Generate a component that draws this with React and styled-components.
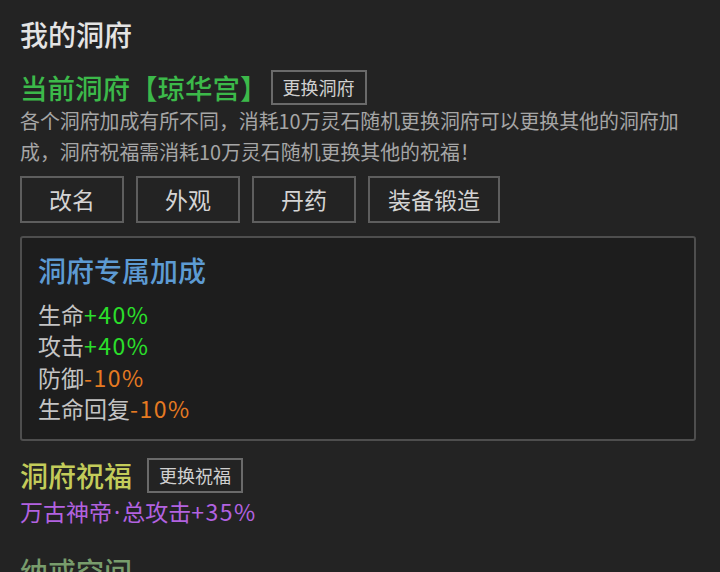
import styled, { createGlobalStyle } from "styled-components";

const GlobalStyle = createGlobalStyle`
  html, body {
    margin: 0;
    padding: 0;
    background: #232323;
  }
  body {
    font-family: "Noto Sans CJK SC", "Noto Sans", sans-serif;
    color: #d8d8d8;
  }
`;

const stats = [
  { label: "生命", value: "+40%", up: true },
  { label: "攻击", value: "+40%", up: true },
  { label: "防御", value: "-10%", up: false },
  { label: "生命回复", value: "-10%", up: false },
];

const actions = ["改名", "外观", "丹药", "装备锻造"];

function App() {
  return (
    <>
      <GlobalStyle />
      <Page>
        <PageTitle>我的洞府</PageTitle>

        <HeadRow>
          <Heading color="#3cb94a" $size="27.5px">当前洞府【琼华宫】</Heading>
          <SmallButton>更换洞府</SmallButton>
        </HeadRow>
        <Desc>
          各个洞府加成有所不同，消耗10万灵石随机更换洞府可以更换其他的洞府加成，洞府祝福需消耗10万灵石随机更换其他的祝福！
        </Desc>

        <Actions>
          {actions.map((a) => (
            <ActionButton key={a}>{a}</ActionButton>
          ))}
        </Actions>

        <Panel>
          <PanelTitle>洞府专属加成</PanelTitle>
          <StatList>
            {stats.map((s) => (
              <Stat key={s.label}>
                {s.label}
                <StatValue $up={s.up}>{s.value}</StatValue>
              </Stat>
            ))}
          </StatList>
        </Panel>

        <HeadRow $tight>
          <Heading color="#c3cc5a">洞府祝福</Heading>
          <SmallButton>更换祝福</SmallButton>
        </HeadRow>
        <Blessing>
          万古神帝<Dot>·</Dot>总攻击<Num>+35%</Num>
        </Blessing>

        <Heading color="#789c6c" $spaced>纳戒空间</Heading>
      </Page>
    </>
  );
}

const Page = styled.div`
  padding: 14px 24px 0 20px;
  height: 572px;
  box-sizing: border-box;
  overflow: hidden;
`;

const PageTitle = styled.h1`
  margin: 0 0 15px;
  font-size: 28px;
  font-weight: 500;
  line-height: 40px;
  color: #e4e4e4;
`;

const HeadRow = styled.div`
  display: flex;
  align-items: center;
  gap: ${(p) => (p.$tight ? "15px" : "3px")};
  margin-top: ${(p) => (p.$tight ? "16px" : "0")};
`;

const Heading = styled.h2`
  margin: ${(p) => (p.$spaced ? "26px 0 0" : "0")};
  font-size: ${(p) => p.$size || "28px"};
  font-weight: 500;
  line-height: 36px;
  color: ${(p) => p.color};
`;

const SmallButton = styled.button`
  height: 35px;
  padding: 0 10px;
  background: transparent;
  border: 2px solid #6a6a6a;
  color: #d0d0d0;
  font-family: inherit;
  font-size: 18px;
  line-height: 1;
`;

const Desc = styled.p`
  margin: 0;
  font-size: 19.9px;
  line-height: 31px;
  color: #a6a6a6;
`;

const Actions = styled.div`
  display: flex;
  gap: 12px;
  margin-top: 9px;
`;

const ActionButton = styled.button`
  min-width: 104px;
  height: 47px;
  padding: 0 18px;
  background: transparent;
  border: 2px solid #5e5e5e;
  color: #d4d4d4;
  font-family: inherit;
  font-size: 23px;
  line-height: 1;
`;

const Panel = styled.div`
  margin-top: 13px;
  height: 205px;
  box-sizing: border-box;
  padding: 14px 16px 0 16px;
  background: #1d1d1d;
  border: 2px solid #4e4e4e;
  border-radius: 3px;
`;

const PanelTitle = styled.h3`
  margin: 0 0 11px;
  font-size: 28px;
  font-weight: 500;
  line-height: 36px;
  color: #5d9bd3;
`;

const StatList = styled.div`
  display: flex;
  flex-direction: column;
`;

const Stat = styled.div`
  font-size: 23px;
  line-height: 31.3px;
  color: #c4c4c4;
`;

const StatValue = styled.span`
  letter-spacing: 1.5px;
  color: ${(p) => (p.$up ? "#2be02b" : "#e57a22")};
`;

const Blessing = styled.div`
  margin-top: 3px;
  font-size: 23px;
  line-height: 30px;
  color: #b262e0;
`;

const Dot = styled.span`
  font-family: "Noto Sans", sans-serif;
  margin: 0 2px;
`;

const Num = styled.span`
  letter-spacing: 1.5px;
`;

export default App;
